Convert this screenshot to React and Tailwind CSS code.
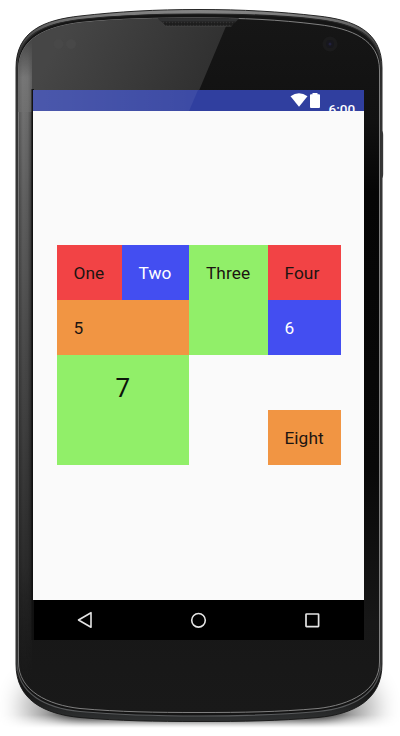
const OUTER =
  'M16 180 V68 C16 31 44 20 80 16 C120 11.5 155 9.5 199 9.5 C243 9.5 278 11.5 318 16 C354 20 382 31 382 68 V664 C382 700 354 714 318 717.5 C278 721 243 721.5 199 721.5 C155 721.5 120 721 80 717.5 C44 714 16 700 16 664 Z';
const RIM =
  'M17 180 V69 C17 34 46 23.5 80 19.5 C120 15 155 14 199 14 C243 14 278 15 318 19.5 C352 23.5 381 34 381 69 V662 C381 694 352 708 318 711.5 C278 715 243 716 199 716 C155 716 120 715 80 711.5 C46 708 17 694 17 662 Z';
const FACE =
  'M18.5 180 V70 C18.5 38 46 27 80 22.5 C120 18.5 155 18 199 18 C243 18 278 19.5 318 24.5 C352 28.5 379.5 40 379.5 70 V662 C379.5 691 350 705 318 708.5 C278 712 243 712.5 199 712.5 C155 712.5 120 712 80 708.5 C48 705 18.5 691 18.5 662 Z';

function PhoneShell() {
  return (
    <svg className="absolute inset-0" width="400" height="736" viewBox="0 0 400 736" aria-hidden="true">
      <defs>
        <linearGradient id="metal" x1="0" y1="0" x2="0" y2="1">
          <stop offset="0" stopColor="#888" />
          <stop offset="0.03" stopColor="#555" />
          <stop offset="0.1" stopColor="#222" />
          <stop offset="0.5" stopColor="#1c1c1c" />
          <stop offset="0.96" stopColor="#151515" />
          <stop offset="1" stopColor="#303233" />
        </linearGradient>
        <linearGradient id="rimEdge" x1="0" y1="0" x2="0" y2="1">
          <stop offset="0" stopColor="#222" />
          <stop offset="0.12" stopColor="#444" />
          <stop offset="0.5" stopColor="#555" />
          <stop offset="0.9" stopColor="#444" />
          <stop offset="1" stopColor="#5a5c5e" />
        </linearGradient>
        <linearGradient id="face" x1="0" y1="0" x2="0" y2="1">
          <stop offset="0" stopColor="#161616" />
          <stop offset="0.15" stopColor="#111" />
          <stop offset="0.25" stopColor="#050505" />
          <stop offset="0.65" stopColor="#080808" />
          <stop offset="0.87" stopColor="#171717" />
          <stop offset="1" stopColor="#191919" />
        </linearGradient>
        <linearGradient id="gloss" gradientUnits="userSpaceOnUse" x1="70" y1="20" x2="220" y2="100">
          <stop offset="0" stopColor="#464646" />
          <stop offset="1" stopColor="#2d2d2d" />
        </linearGradient>
        <linearGradient id="sideTone" gradientUnits="userSpaceOnUse" x1="0" y1="38" x2="0" y2="700">
          <stop offset="0" stopColor="#777" stopOpacity="0" />
          <stop offset="0.06" stopColor="#777" />
          <stop offset="0.25" stopColor="#606060" />
          <stop offset="0.5" stopColor="#484848" />
          <stop offset="0.8" stopColor="#2b2b2b" />
          <stop offset="1" stopColor="#1b1b1b" stopOpacity="0" />
        </linearGradient>
        <linearGradient id="sideFade" gradientUnits="userSpaceOnUse" x1="18" y1="0" x2="32" y2="0">
          <stop offset="0" stopColor="#aaa" />
          <stop offset="0.35" stopColor="#fff" />
          <stop offset="0.7" stopColor="#eee" />
          <stop offset="1" stopColor="#888" />
        </linearGradient>
        <mask id="sideMask" maskUnits="userSpaceOnUse" x="0" y="0" width="400" height="736">
          <rect x="18" y="30" width="14" height="680" fill="url(#sideFade)" />
        </mask>
        <filter id="soft" x="-20%" y="-80%" width="140%" height="260%">
          <feGaussianBlur stdDeviation="14 3.5" />
        </filter>
        <filter id="softWide" x="-20%" y="-80%" width="140%" height="260%">
          <feGaussianBlur stdDeviation="12 14" />
        </filter>
        <linearGradient id="shadowFade" gradientUnits="userSpaceOnUse" x1="0" y1="715" x2="0" y2="728">
          <stop offset="0" stopColor="#fff" />
          <stop offset="1" stopColor="#000" />
        </linearGradient>
        <mask id="shadowMask" maskUnits="userSpaceOnUse" x="0" y="0" width="400" height="736">
          <rect width="400" height="736" fill="url(#shadowFade)" />
        </mask>
        <pattern id="mesh" width="3" height="3" patternUnits="userSpaceOnUse">
          <rect width="3" height="3" fill="#1d1d1d" />
          <circle cx="1.5" cy="1.5" r="0.8" fill="#333" />
        </pattern>
        <clipPath id="faceClip"><path d={FACE} /></clipPath>
      </defs>
      <g mask="url(#shadowMask)">
        <rect x="58" y="704" width="282" height="22" rx="11" fill="#000" opacity="0.75" filter="url(#soft)" />
        <rect x="20" y="682" width="358" height="50" rx="25" fill="#000" opacity="0.32" filter="url(#softWide)" />
      </g>
      <path d="M381 93 m0 0" />
      <path d="M381 130 q2.2 1 2.2 5 V174 q0 4 -2.2 5 Z" fill="#555" />
      <path d={OUTER} fill="url(#metal)" stroke="#151515" strokeWidth="0.9" />
      <path d={RIM} fill="#151515" stroke="url(#rimEdge)" strokeWidth="1.2" />
      <path d={FACE} fill="url(#face)" stroke="#8c8c8c" strokeWidth="0.9" />
      <g clipPath="url(#faceClip)">
        <path d="M0 0 H237 L190 112 H0 Z" fill="url(#gloss)" />
        <g mask="url(#sideMask)">
          <rect x="18" y="38" width="14" height="662" fill="url(#sideTone)" />
        </g>
        <rect x="31.5" y="89" width="2.5" height="551" fill="#111" />
      </g>
      <path d="M158 18.5 L165.5 26 H231.5 L239 18.5 Z" fill="url(#mesh)" />
      <path d="M158 18.5 L161 21.5 H236 L239 18.5 Z" fill="#303132" />
      <path d="M161 21.5 L165.5 26.3 H231.5" stroke="#444" strokeWidth="0.7" fill="none" />
      <circle cx="58.5" cy="44" r="5" fill="#484848" />
      <circle cx="71" cy="44" r="5" fill="#484848" />
      <circle cx="330" cy="44" r="7.5" fill="#1b1b1c" />
      <circle cx="330" cy="44" r="4" fill="#17171d" />
      <circle cx="330" cy="44" r="1.5" fill="#22213e" />
    </svg>
  );
}

function StatusBar() {
  return (
    <div className="relative flex h-[21px] shrink-0 items-start overflow-hidden bg-[#303f9f] text-white">
      <svg className="absolute inset-0" width="331" height="21" viewBox="0 0 331 21">
        <defs>
          <linearGradient id="barGloss" x1="0" y1="0" x2="1" y2="0">
            <stop offset="0" stopColor="#fff" stopOpacity="0.13" />
            <stop offset="1" stopColor="#fff" stopOpacity="0.06" />
          </linearGradient>
        </defs>
        <path d="M0 0 H165 L156 21 H0 Z" fill="url(#barGloss)" />
      </svg>
      <svg className="ml-[256.5px] mt-[3px] shrink-0" width="18" height="14" viewBox="0 0 18 14" fill="currentColor">
        <path d="M0.5 3.3 Q9 -2.7 17.5 3.3 L9 13.7 Z" />
      </svg>
      <svg className="ml-[2.5px] mt-[3px] shrink-0" width="10" height="15" viewBox="0 0 10 15" fill="currentColor">
        <path d="M2.5 0 H7.5 V1.2 H9 Q10 1.2 10 2.2 V14 Q10 15 9 15 H1 Q0 15 0 14 V2.2 Q0 1.2 1 1.2 H2.5 Z" />
      </svg>
      <span className="ml-[8.5px] mt-[11px] text-[13.5px] font-medium leading-[16px]">6:00</span>
    </div>
  );
}

function Cell({ className, children }) {
  return <div className={`flex items-center pl-[17px] ${className}`}>{children}</div>;
}

function NavBar() {
  return (
    <div className="ml-px flex h-[40px] shrink-0 items-center bg-black pl-[43px] text-[#e4e4e4]">
      <svg width="16" height="18" viewBox="0 0 16 18" fill="none" stroke="currentColor" strokeWidth="1.6" strokeLinejoin="round">
        <path d="M14 1.7 V16.3 L1.5 9 Z" />
      </svg>
      <svg className="ml-[97px]" width="18" height="18" viewBox="0 0 18 18" fill="none" stroke="currentColor" strokeWidth="1.6">
        <circle cx="8.5" cy="9.3" r="6.8" />
      </svg>
      <svg className="ml-[96px]" width="18" height="18" viewBox="0 0 18 18" fill="none" stroke="currentColor" strokeWidth="1.7">
        <rect x="2" y="3" width="12.6" height="12.6" rx="0.5" />
      </svg>
    </div>
  );
}

export default function App() {
  return (
    <div className="relative h-[736px] w-[400px] overflow-hidden bg-white font-['Roboto',sans-serif]">
      <PhoneShell />
      <main className="relative ml-[33px] flex h-[640px] w-[331px] flex-col pt-[90px]">
        <StatusBar />
        <section className="flex h-[489px] shrink-0 items-start bg-[#fafafa] pl-[23.5px] pt-[134px]">
          <div className="grid grid-cols-[65px_67.5px_78.5px_73px] grid-rows-[55px_55px_55px_55px] text-[17.3px] tracking-[0.05px] text-[#1d1511]">
            <Cell className="bg-[#f24345] pt-[2px]">One</Cell>
            <Cell className="bg-[#434ef1] pt-[2px] text-white">Two</Cell>
            <Cell className="row-span-2 items-start! bg-[#91ef69] pt-[16px]">Three</Cell>
            <Cell className="bg-[#f24345] pt-[2px]">Four</Cell>
            <Cell className="col-span-2 bg-[#f19543] pt-[2px]">5</Cell>
            <Cell className="bg-[#434ef1] pt-[2px] text-white">6</Cell>
            <div className="col-span-2 row-span-2 flex justify-center bg-[#91ef69] pt-[15px] text-[26px] leading-[36px] text-[#0c150a]">7</div>
            <Cell className="col-start-4 row-start-4 bg-[#f19543] pt-[2px]">Eight</Cell>
          </div>
        </section>
        <NavBar />
      </main>
    </div>
  );
}
